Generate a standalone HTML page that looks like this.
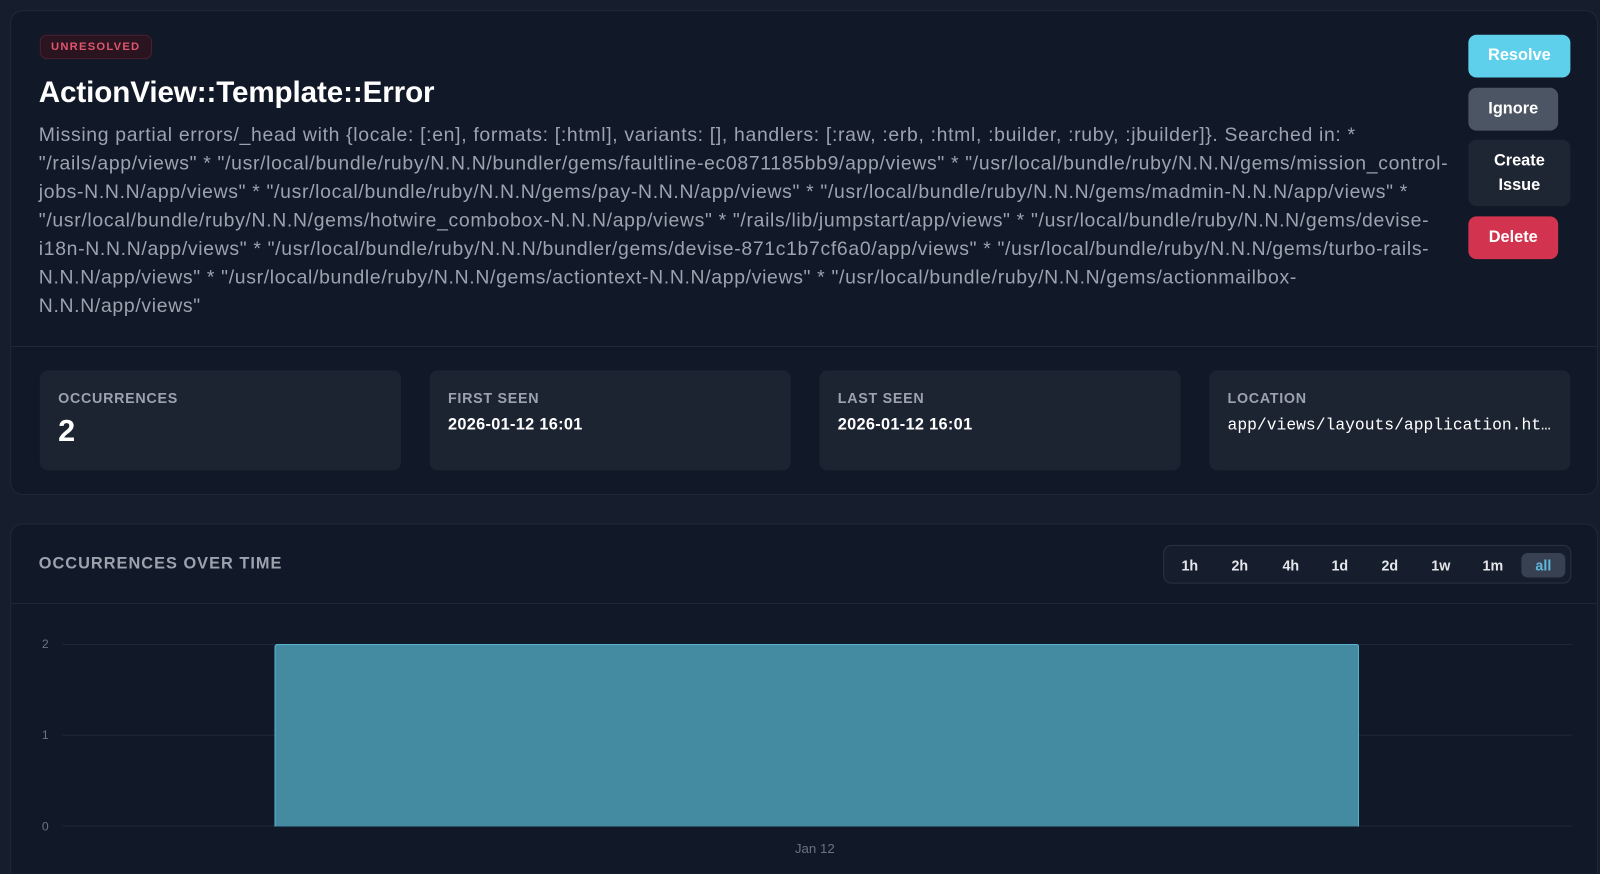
<!DOCTYPE html>
<html style="width:1600px;height:874px;overflow:hidden"><head><meta charset="utf-8"><style>
*{box-sizing:border-box;margin:0;padding:0}
body{width:1600px;height:874px;background:#161e2d;font-family:"Liberation Sans",sans-serif;overflow:hidden;position:relative}
#w{position:absolute;left:0;top:0;width:1568px;height:856px;transform:scale(1.0204);transform-origin:0 0;overflow:hidden}
.card{position:absolute;left:10px;width:1556px;background:#111827;border:1px solid #1f2937;border-radius:12px}
.badge{position:absolute;left:28px;top:23px;height:24px;padding:0 10px;border:1px solid #4a2030;background:#2a1420;border-radius:7px;color:#e0556e;font-size:11px;font-weight:bold;letter-spacing:1.2px;line-height:22px}
h1{position:absolute;left:27px;top:64px;color:#fff;font-size:29px;font-weight:bold;letter-spacing:-0.1px}
.msg{position:absolute;left:27px;top:108px;width:1400px;color:#9ca3af;font-size:19px;letter-spacing:0.66px;line-height:28px;white-space:nowrap}
.btn{position:absolute;border-radius:8px;color:#fff;font-size:16px;font-weight:bold;text-align:center;display:flex;align-items:center;justify-content:center;line-height:24px}
.sep{position:absolute;left:0;right:0;height:1px;background:#1f2937}
.stat{position:absolute;top:352px;width:354px;height:98px;background:#1c2331;border-radius:8px;padding:19px 18px}
.stat .l{color:#9ca3af;font-size:14px;font-weight:bold;letter-spacing:.7px}
.stat .v{color:#fff;font-size:16px;font-weight:bold;margin-top:10px;letter-spacing:.3px}
.tabs{position:absolute;left:1129px;top:20px;width:400px;height:38px;border:1px solid #2a3342;border-radius:8px;background:#161e2d}
.tabs span{position:absolute;top:7px;height:24px;line-height:24px;color:#e5e7eb;font-size:14px;font-weight:bold;text-align:center;width:40px}
.ax{position:absolute;color:#6b7280;font-size:12px}
.gl{position:absolute;left:50px;width:1480px;height:1px;background:#1f2937}
</style></head><body><div id="w">
<div class="card" style="top:10px;height:475px">
<div class="badge">UNRESOLVED</div>
<h1>ActionView::Template::Error</h1>
<div class="msg">Missing partial errors/_head with {locale: [:en], formats: [:html], variants: [], handlers: [:raw, :erb, :html, :builder, :ruby, :jbuilder]}. Searched in: *<br>"/rails/app/views" * "/usr/local/bundle/ruby/N.N.N/bundler/gems/faultline-ec0871185bb9/app/views" * "/usr/local/bundle/ruby/N.N.N/gems/mission_control-<br>jobs-N.N.N/app/views" * "/usr/local/bundle/ruby/N.N.N/gems/pay-N.N.N/app/views" * "/usr/local/bundle/ruby/N.N.N/gems/madmin-N.N.N/app/views" *<br>"/usr/local/bundle/ruby/N.N.N/gems/hotwire_combobox-N.N.N/app/views" * "/rails/lib/jumpstart/app/views" * "/usr/local/bundle/ruby/N.N.N/gems/devise-<br>i18n-N.N.N/app/views" * "/usr/local/bundle/ruby/N.N.N/bundler/gems/devise-871c1b7cf6a0/app/views" * "/usr/local/bundle/ruby/N.N.N/gems/turbo-rails-<br>N.N.N/app/views" * "/usr/local/bundle/ruby/N.N.N/gems/actiontext-N.N.N/app/views" * "/usr/local/bundle/ruby/N.N.N/gems/actionmailbox-<br>N.N.N/app/views"</div>
<div class="btn" style="left:1428px;top:23px;width:100px;height:42px;background:#5fd0ec">Resolve</div>
<div class="btn" style="left:1428px;top:75px;width:88px;height:42px;background:#4b5563">Ignore</div>
<div class="btn" style="left:1428px;top:126px;width:100px;height:65px;background:#1f2633">Create<br>Issue</div>
<div class="btn" style="left:1428px;top:201px;width:88px;height:42px;background:#d23450">Delete</div>
<div class="sep" style="top:328px"></div>
<div class="stat" style="left:28px"><div class="l">OCCURRENCES</div><div class="v" style="font-size:30px;margin-top:8px">2</div></div>
<div class="stat" style="left:410px"><div class="l">FIRST SEEN</div><div class="v">2026-01-12 16:01</div></div>
<div class="stat" style="left:792px"><div class="l">LAST SEEN</div><div class="v">2026-01-12 16:01</div></div>
<div class="stat" style="left:1174px"><div class="l">LOCATION</div><div class="v" style="font-family:'Liberation Mono',monospace;font-weight:normal;font-size:16px;letter-spacing:0;white-space:nowrap;overflow:hidden;text-overflow:ellipsis">app/views/layouts/application.html.erb</div></div>
</div>
<div class="card" style="top:513px;height:360px">
<div style="position:absolute;left:27px;top:30px;color:#9ca3af;font-size:16px;font-weight:bold;letter-spacing:1px">OCCURRENCES OVER TIME</div>
<div class="tabs">
<span style="left:5px">1h</span><span style="left:54px">2h</span><span style="left:104px">4h</span><span style="left:152px">1d</span><span style="left:201px">2d</span><span style="left:251px">1w</span><span style="left:302px">1m</span><span style="left:350px;width:43px;background:#374151;border-radius:6px;color:#5fb8dc">all</span>
</div>
<div class="sep" style="top:77px"></div>
<div class="gl" style="top:117px"></div><div class="gl" style="top:206px"></div><div class="gl" style="top:295px"></div>
<div class="ax" style="left:30px;top:110px">2</div><div class="ax" style="left:30px;top:199px">1</div><div class="ax" style="left:30px;top:289px">0</div>
<div style="position:absolute;left:258px;top:117px;width:1063px;height:179px;background:#448aa0;border:1px solid #5ab8d4;border-bottom:none;border-radius:3px 3px 0 0"></div>
<div class="ax" style="left:768px;top:310px;font-size:13px">Jan 12</div>
</div>
</div></body></html>
